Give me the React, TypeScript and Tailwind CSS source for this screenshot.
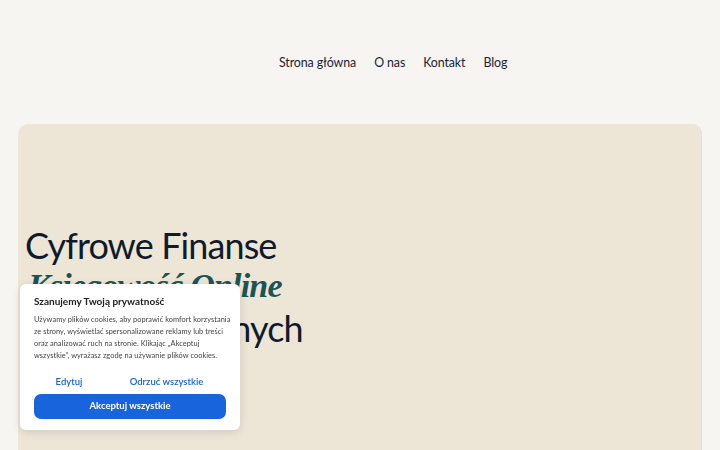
const nav = ['Strona główna', 'O nas', 'Kontakt', 'Blog'];

function CookieBanner() {
  return (
    <div className="fixed left-5 bottom-5 w-[220px] bg-white rounded-md shadow-[0_2px_10px_rgba(0,0,0,0.12)] px-[14px] pt-[10px] pb-[11px]">
      <h4 className="text-[10px] font-bold text-[#222] leading-[14px]">Szanujemy Twoją prywatność</h4>
      <p className="mt-[6px] -mr-[6px] whitespace-nowrap text-[7.4px] leading-[12px] text-[#444] tracking-[0.05px]">
        Używamy plików cookies, aby poprawić komfort korzystania
        <br />
        ze strony, wyświetlać spersonalizowane reklamy lub treści
        <br />
        oraz analizować ruch na stronie. Klikając „Akceptuj
        <br />
        wszystkie”, wyrażasz zgodę na używanie plików cookies.
      </p>
      <div className="mt-[13px] flex items-center text-[9.5px] font-semibold text-[#1a62d2]">
        <button className="w-[70px] text-center">Edytuj</button>
        <button className="ml-[10px] w-[105px] text-center">Odrzuć wszystkie</button>
      </div>
      <button className="mt-[5px] w-full h-[25px] rounded-[7px] bg-[#1864dc] text-white text-[9.5px] font-bold">
        Akceptuj wszystkie
      </button>
    </div>
  );
}

export default function App() {
  return (
    <div className="bg-[#f7f5f1] font-['Lato',sans-serif] overflow-hidden h-[450px]">
      <header className="h-[124px] flex items-center pl-[279px] pt-[2px]">
        <nav className="flex gap-[18px] text-[12.4px] tracking-[-0.1px] text-[#1a2334]">
          {nav.map((n) => (
            <a key={n} href="#">{n}</a>
          ))}
        </nav>
      </header>
      <section className="mx-[18px] h-[400px] rounded-[10px] bg-[#ede6d7] border-r border-[#e6ddd0] pl-[7px] pt-[101px]">
        <h1 className="text-[36px] leading-[40px] tracking-[-0.9px] text-[#0f1b2d]">
          Cyfrowe Finanse
          <br />
          <em className="font-['Liberation_Serif',serif] font-bold text-[34px] tracking-[-0.8px] text-[#1c5455] pl-[3px] relative -top-[2px]">Księgowość Online</em>
          <br />
          dla Firm Lokalnych
        </h1>
      </section>
      <CookieBanner />
    </div>
  );
}
